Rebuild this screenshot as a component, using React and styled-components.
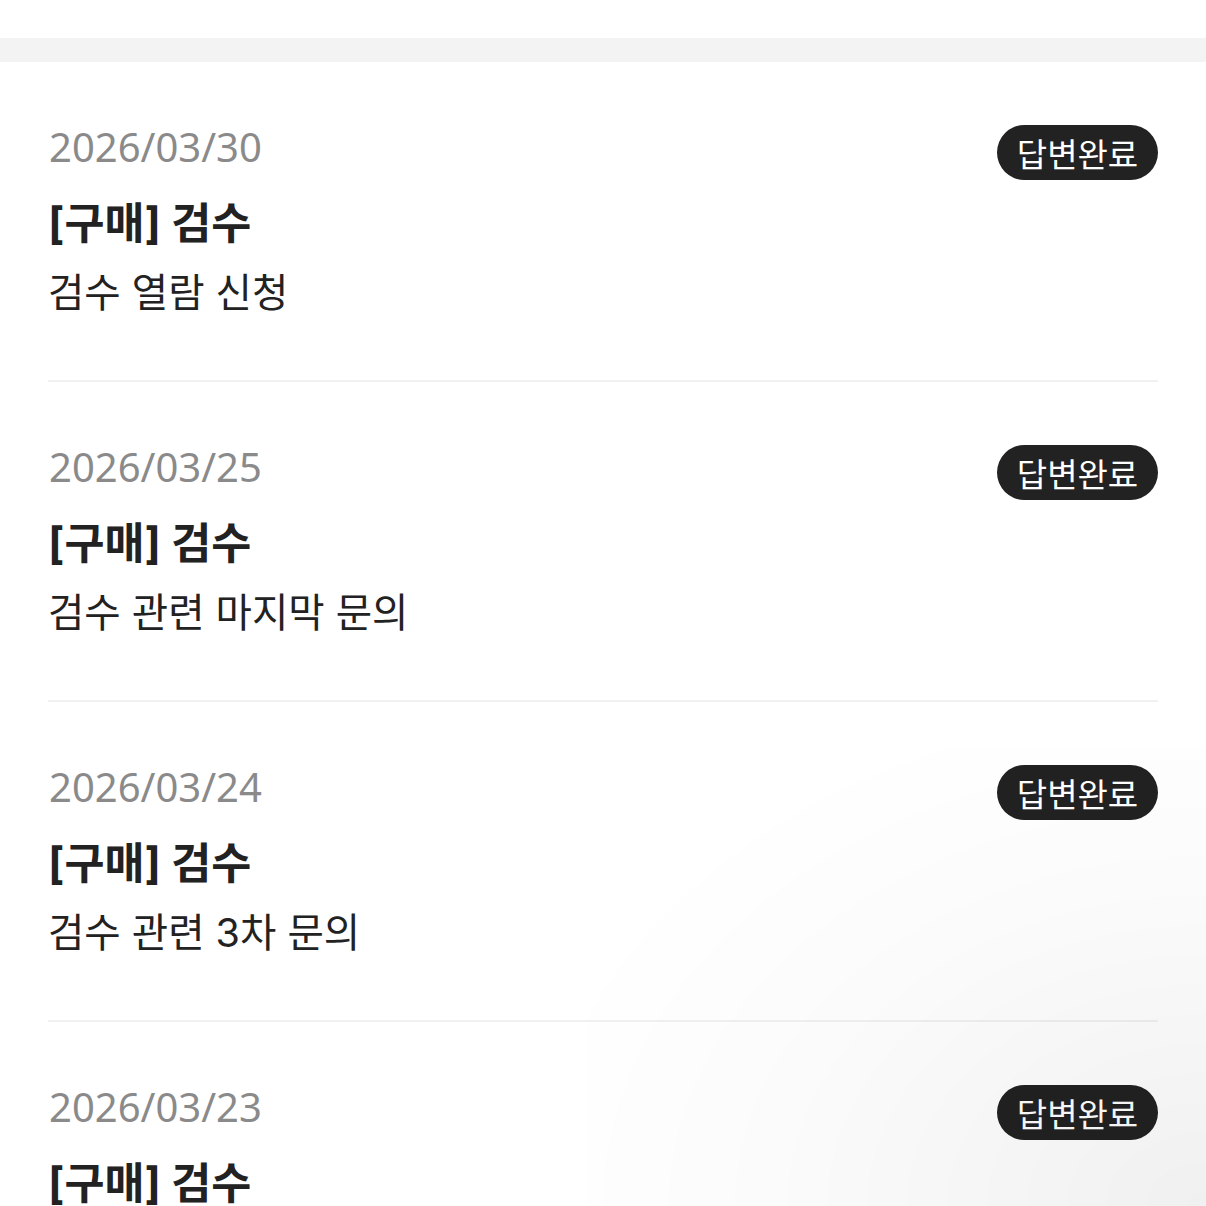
import React from "react";
import styled, { createGlobalStyle } from "styled-components";

const GlobalStyle = createGlobalStyle`
  body {
    margin: 0;
    background: #fff;
    font-family: Inter, "Noto Sans CJK KR", sans-serif;
  }
`;

const Page = styled.div`
  width: 100%;
  min-height: 100vh;
  background: #fff;
`;

const TopSpace = styled.div`
  height: 38px;
`;

const Band = styled.div`
  height: 24px;
  background: #f3f3f3;
`;

const List = styled.ul`
  list-style: none;
  margin: 0;
  padding: 0 48px;
`;

const Item = styled.li`
  padding: 63px 0 59px;
  border-bottom: 2px solid #f1f1f1;
`;

const Header = styled.div`
  display: flex;
  align-items: center;
  justify-content: space-between;
  height: 55px;
`;

const DateText = styled.span`
  font-family: "Noto Sans", sans-serif;
  font-size: 40px;
  color: #8a8a8a;
  padding-left: 1px;
  margin-top: -12px;
`;

const Badge = styled.span`
  display: inline-flex;
  align-items: center;
  justify-content: center;
  width: 161px;
  height: 55px;
  border-radius: 28px;
  background: #222;
  color: #fff;
  font-size: 33px;
  font-family: "Noto Sans CJK KR", sans-serif;
`;

const Title = styled.div`
  margin-top: 15px;
  font-size: 43.5px;
  line-height: 56px;
  font-weight: 700;
  color: #222;
`;

const Body = styled.div`
  margin-top: 14px;
  font-size: 39.5px;
  line-height: 56px;
  color: #222;
`;

const CornerShade = styled.div`
  position: fixed;
  right: 0;
  bottom: 0;
  width: 620px;
  height: 460px;
  pointer-events: none;
  background: radial-gradient(
    ellipse at 100% 100%,
    rgba(0, 0, 0, 0.06) 0%,
    rgba(0, 0, 0, 0.015) 50%,
    rgba(0, 0, 0, 0) 80%
  );
`;

const inquiries = [
  { date: "2026/03/30", title: "[구매] 검수", body: "검수 열람 신청" },
  { date: "2026/03/25", title: "[구매] 검수", body: "검수 관련 마지막 문의" },
  { date: "2026/03/24", title: "[구매] 검수", body: "검수 관련 3차 문의" },
  { date: "2026/03/23", title: "[구매] 검수", body: "검수 관련 2차 문의" },
];

function App() {
  return (
    <Page>
      <GlobalStyle />
      <TopSpace />
      <Band />
      <List>
        {inquiries.map((q) => (
          <Item key={q.date}>
            <Header>
              <DateText>{q.date}</DateText>
              <Badge>답변완료</Badge>
            </Header>
            <Title>{q.title}</Title>
            <Body>{q.body}</Body>
          </Item>
        ))}
      </List>
      <CornerShade />
    </Page>
  );
}

export default App;
